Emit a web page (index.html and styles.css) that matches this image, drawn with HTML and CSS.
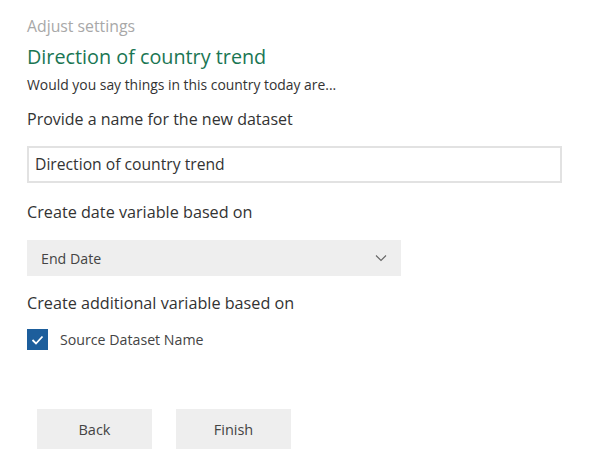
FILE: index.html
```html
<!DOCTYPE html>
<html>
<head>
<meta charset="utf-8">
<link rel="stylesheet" href="styles.css">
</head>
<body>
<div class="panel">
  <div class="eyebrow">Adjust settings</div>
  <h1 class="title">Direction of country trend</h1>
  <p class="subtitle">Would you say things in this country today are...</p>

  <label class="label label-name">Provide a name for the new dataset</label>
  <div class="text-input">Direction of country trend</div>

  <label class="label label-date">Create date variable based on</label>
  <div class="select">
    <span class="select-value">End Date</span>
    <svg class="chevron" width="12" height="8" viewBox="0 0 12 8"><path d="M1 1.5 L6 6.5 L11 1.5" fill="none" stroke="#666" stroke-width="1.1"/></svg>
  </div>

  <label class="label label-extra">Create additional variable based on</label>
  <div class="check-row">
    <span class="checkbox">
      <svg width="13" height="10" viewBox="0 0 13 10"><path d="M1.5 5 L5 8.5 L11.5 1.5" fill="none" stroke="#fff" stroke-width="1.8"/></svg>
    </span>
    <span class="check-label">Source Dataset Name</span>
  </div>

  <div class="actions">
    <button class="btn">Back</button>
    <button class="btn">Finish</button>
  </div>
</div>
</body>
</html>
```

FILE: styles.css
```css
* { box-sizing: border-box; }
html, body { margin: 0; padding: 0; background: #fff; }
body {
  font-family: "Open Sans", Lato, sans-serif;
  color: #333;
}
.panel {
  padding: 16px 0 0 27px;
  display: flex;
  flex-direction: column;
  align-items: flex-start;
}
.eyebrow {
  font-size: 15.8px;
  color: #a8a8a8;
  line-height: 21px;
}
.title {
  margin: 7px 0 0 0;
  font-size: 19.8px;
  font-weight: 400;
  color: #1a7653;
  line-height: 26px;
}
.subtitle {
  margin: 6px 0 0 0;
  font-size: 13.9px;
  line-height: 18px;
  color: #333;
}
.label {
  font-size: 16px;
  line-height: 20px;
  color: #333;
}
.label-name { margin-top: 15px; }
.label-date, .label-extra { font-size: 16.2px; }
.text-input {
  margin-top: 17px;
  width: 535px;
  height: 37px;
  border: 2px solid #e2e2e2;
  padding: 0 6px;
  font-size: 15.7px;
  line-height: 33px;
  color: #333;
}
.label-date { margin-top: 19px; }
.select {
  margin-top: 18px;
  width: 374px;
  height: 36px;
  background: #eeeeee;
  display: flex;
  align-items: center;
  justify-content: space-between;
  padding: 0 14px 0 14px;
}
.select-value { font-size: 14.2px; color: #444; }
.label-extra { margin-top: 17px; }
.check-row {
  margin-top: 16px;
  display: flex;
  align-items: center;
  gap: 12px;
}
.checkbox {
  width: 21px;
  height: 21px;
  background: #1d5e9c;
  display: flex;
  align-items: center;
  justify-content: center;
}
.check-label { font-size: 14.2px; color: #444; }
.actions {
  margin-top: 59px;
  margin-left: 10px;
  display: flex;
  gap: 24px;
}
.btn {
  width: 115px;
  height: 40px;
  border: none;
  background: #eeeeee;
  font-family: inherit;
  font-size: 14.5px;
  color: #444;
}
```
